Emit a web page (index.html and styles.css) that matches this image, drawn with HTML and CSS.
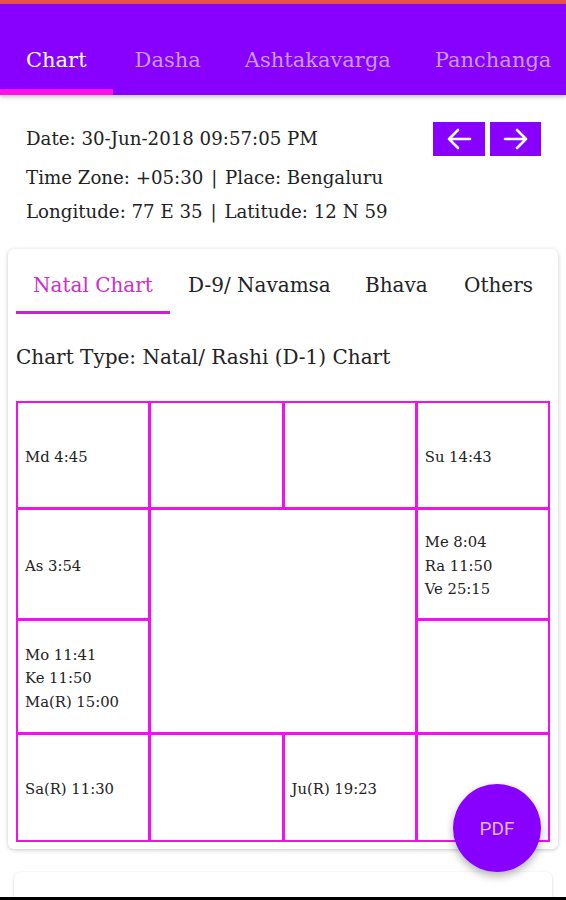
FILE: index.html
```html
<!DOCTYPE html>
<html>
<head>
<meta charset="utf-8">
<link rel="stylesheet" href="styles.css">
</head>
<body>
<div class="topline"></div>
<header class="appbar">
  <nav class="tabs">
    <div class="tab active">Chart</div>
    <div class="tab">Dasha</div>
    <div class="tab">Ashtakavarga</div>
    <div class="tab">Panchanga</div>
  </nav>
</header>
<section class="info">
  <div class="row first">
    <span>Date: 30-Jun-2018 09:57:05 PM</span>
    <div class="navbtns">
      <button class="nbtn"><svg width="26" height="22" viewBox="0 0 26 22"><path d="M24 11H3M12 2L3 11l9 9" fill="none" stroke="#fff" stroke-width="2.6" stroke-linecap="round" stroke-linejoin="round"/></svg></button>
      <button class="nbtn"><svg width="26" height="22" viewBox="0 0 26 22"><path d="M2 11h21M14 2l9 9-9 9" fill="none" stroke="#fff" stroke-width="2.6" stroke-linecap="round" stroke-linejoin="round"/></svg></button>
    </div>
  </div>
  <div class="row">Time Zone: +05:30 <span class="pipe">|</span> Place: Bengaluru</div>
  <div class="row">Longitude: 77 E 35 <span class="pipe">|</span> Latitude: 12 N 59</div>
</section>
<main class="card">
  <nav class="subtabs">
    <div class="subtab active">Natal Chart</div>
    <div class="subtab">D-9/ Navamsa</div>
    <div class="subtab">Bhava</div>
    <div class="subtab">Others</div>
  </nav>
  <p class="charttype">Chart Type: Natal/ Rashi (D-1) Chart</p>
  <div class="chart">
    <div class="cell">Md 4:45</div>
    <div class="cell"></div>
    <div class="cell"></div>
    <div class="cell">Su 14:43</div>
    <div class="cell">As 3:54</div>
    <div class="cell center"></div>
    <div class="cell">Me 8:04<br>Ra 11:50<br>Ve 25:15</div>
    <div class="cell">Mo 11:41<br>Ke 11:50<br>Ma(R) 15:00</div>
    <div class="cell"></div>
    <div class="cell">Sa(R) 11:30</div>
    <div class="cell"></div>
    <div class="cell">Ju(R) 19:23</div>
    <div class="cell"></div>
  </div>
</main>
<div class="nextcard"></div>
<div class="navbar"></div>
<button class="fab">PDF</button>
</body>
</html>
```
FILE: styles.css
```css
* { box-sizing: border-box; }
html, body { margin: 0; padding: 0; }
body {
  width: 566px;
  height: 900px;
  overflow: hidden;
  background: #ffffff;
  font-family: "DejaVu Serif", "Liberation Serif", serif;
  color: #222;
  position: relative;
}
.topline { height: 4px; background: #e9524a; }
.appbar {
  height: 91px;
  background: #8800fe;
  box-shadow: 0 2px 4px rgba(0,0,0,0.25);
  display: flex;
  align-items: flex-end;
  overflow: hidden;
}
.tabs { display: flex; height: 100%; }
.tab {
  display: flex;
  align-items: center;
  padding: 26px 22px 0;
  font-size: 21px;
  color: #c89bf2;
  white-space: nowrap;
  border-bottom: 6px solid transparent;
}
.tab.active { color: #fff; border-bottom-color: #ff10e8; padding: 26px 26px 0 26px; }
.info { padding: 26px 25px 0 26px; height: 153px; }
.row { font-size: 18.2px; line-height: 34px; color: #222; }
.pipe { margin: 0 2px; }
.row.first { display: flex; justify-content: space-between; align-items: center; height: 36px; margin-bottom: 4px; }
.navbtns { display: flex; gap: 5px; }
.nbtn {
  width: 51px;
  height: 34px;
  background: #8800fe;
  border: none;
  padding: 0;
  display: flex;
  align-items: center;
  justify-content: center;
}
.nbtn:first-child { width: 52px; }
.card {
  margin: 1px 8px 0;
  height: 600px;
  background: #fff;
  border-radius: 6px;
  box-shadow: 0 1px 4px rgba(0,0,0,0.22);
  padding: 8px 8px;
}
.subtabs { display: flex; height: 57px; }
.subtab {
  font-size: 20px;
  padding: 16px 0 0;
  color: #222;
  white-space: nowrap;
}
.subtab:nth-child(1) { width: 154px; padding-left: 17px; color: #cc2ecb; border-bottom: 3px solid #d21ed2; }
.subtab:nth-child(2) { padding-left: 18px; width: 195px; }
.subtab:nth-child(3) { width: 99px; padding-left: 0; }
.subtab:nth-child(4) { padding-left: 0; }
.charttype { margin: 31px 0 0; font-size: 20px; color: #222; height: 56px; }
.chart {
  display: grid;
  grid-template-columns: repeat(4, 1fr);
  grid-template-rows: 104px 108px 111px 105px;
  gap: 3px;
  padding: 2px;
  background: #f50ff0;
  width: 534px;
}
.cell {
  background: #fff;
  display: flex;
  align-items: center;
  padding: 3px 0 0 7px;
  font-size: 14.8px;
  line-height: 23.5px;
  color: #222;
}
.center { grid-column: 2 / span 2; grid-row: 2 / span 2; }
.nextcard {
  margin: 23px 14px 0;
  height: 40px;
  border-radius: 6px;
  background: #fff;
  box-shadow: 0 1px 3px rgba(0,0,0,0.2);
}
.navbar { position: absolute; left: 0; right: 0; bottom: 0; height: 3px; background: #000; }
.fab {
  position: absolute;
  left: 453px;
  top: 784px;
  width: 88px;
  height: 88px;
  border-radius: 50%;
  border: none;
  background: #8800fe;
  color: #e0b8ff;
  font-family: "Roboto", "Noto Sans", sans-serif;
  font-size: 19px;
  box-shadow: 0 4px 8px rgba(0,0,0,0.3);
}
```
